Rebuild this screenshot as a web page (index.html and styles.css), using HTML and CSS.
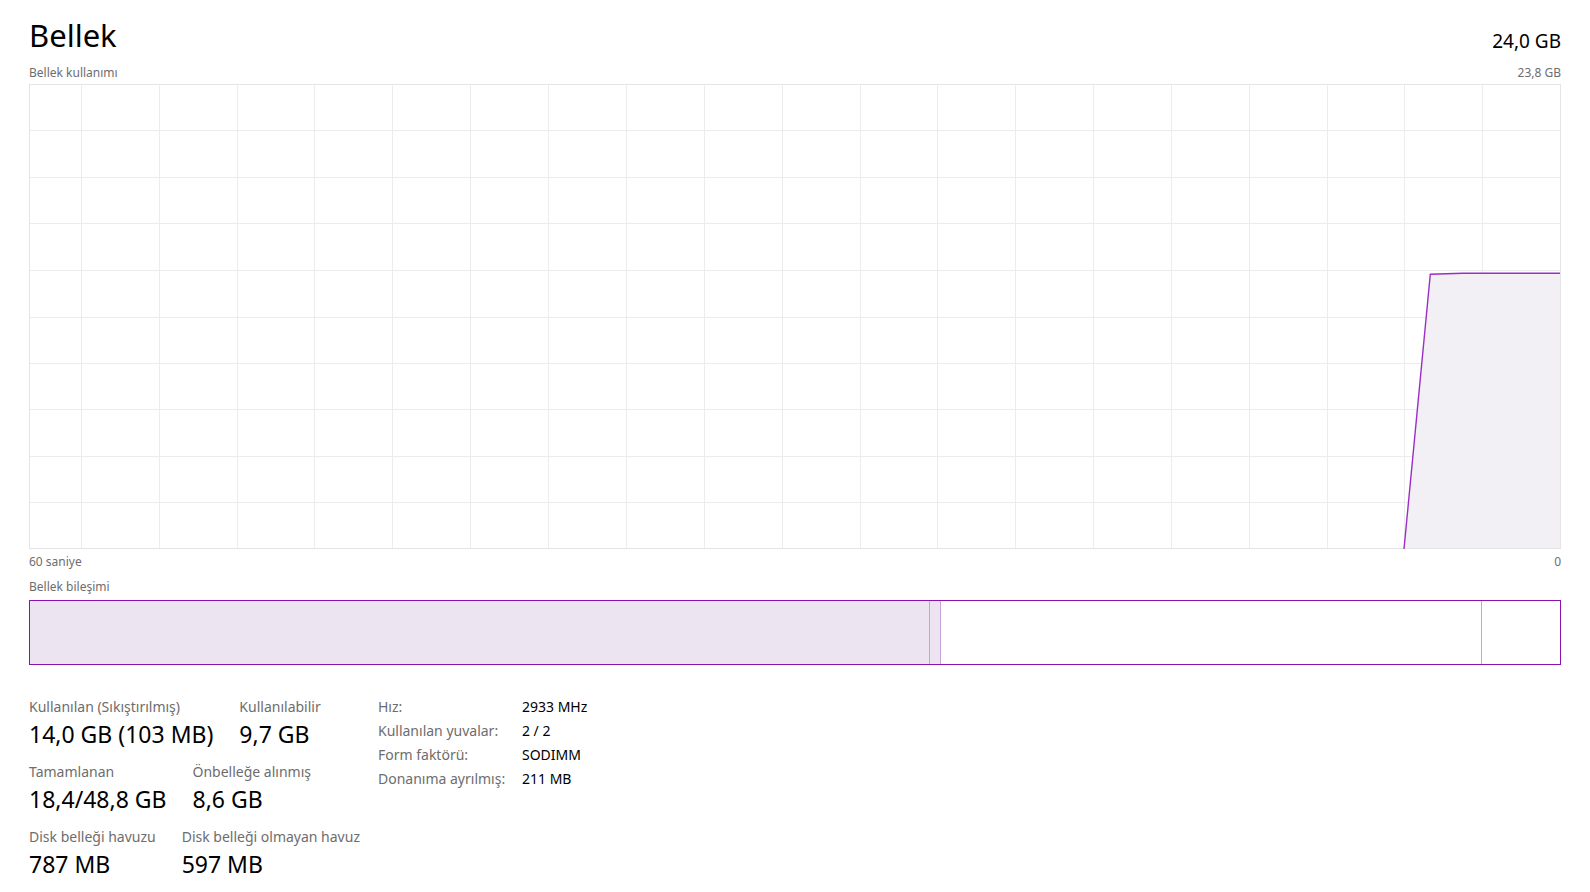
FILE: index.html
```html
<!DOCTYPE html>
<html lang="tr">

<head>
  <meta charset="UTF-8">
  <meta name="viewport" content="width=device-width, initial-scale=1.0">
  <title>Bellek</title>
  <link rel="stylesheet" href="styles.css">
</head>

<body>
  <div class="page">
    <header class="head">
      <h1>Bellek</h1>
      <span class="total">24,0 GB</span>
    </header>

    <div class="caption">
      <span>Bellek kullanımı</span>
      <span>23,8 GB</span>
    </div>

    <div class="chart">
      <svg width="1532" height="465" viewBox="0 0 1532 465">
        <g class="grid" shape-rendering="crispEdges">
          <path d="M52.5 0V465M130.5 0V465M208.5 0V465M285.5 0V465M363.5 0V465M441.5 0V465M519.5 0V465M597.5 0V465M675.5 0V465M753.5 0V465M831.5 0V465M908.5 0V465M986.5 0V465M1064.5 0V465M1142.5 0V465M1220.5 0V465M1298.5 0V465M1375.5 0V465M1453.5 0V465" />
          <path d="M0 46.5H1532M0 93.5H1532M0 139.5H1532M0 186.5H1532M0 233.5H1532M0 279.5H1532M0 325.5H1532M0 372.5H1532M0 418.5H1532" />
        </g>
        <polygon class="area" points="1375,465 1401.3,190.3 1434,189.3 1531,189.3 1531,465" />
        <rect class="frame" x="0.5" y="0.5" width="1531" height="464" shape-rendering="crispEdges" />
        <polyline class="line" points="1375,465 1401.3,190.3 1434,189.3 1531,189.3" />
      </svg>
    </div>

    <div class="caption axis">
      <span>60 saniye</span>
      <span>0</span>
    </div>

    <div class="caption comp-title">Bellek bileşimi</div>

    <div class="comp">
      <div class="seg used"></div>
      <div class="seg modified"></div>
      <div class="seg standby"></div>
      <div class="seg free"></div>
    </div>

    <section class="stats">
      <div class="stats-main">
        <div class="row">
          <div class="stat">
            <div class="lbl">Kullanılan (Sıkıştırılmış)</div>
            <div class="val">14,0 GB (103 MB)</div>
          </div>
          <div class="stat">
            <div class="lbl">Kullanılabilir</div>
            <div class="val">9,7 GB</div>
          </div>
        </div>
        <div class="row">
          <div class="stat">
            <div class="lbl">Tamamlanan</div>
            <div class="val">18,4/48,8 GB</div>
          </div>
          <div class="stat">
            <div class="lbl">Önbelleğe alınmış</div>
            <div class="val">8,6 GB</div>
          </div>
        </div>
        <div class="row">
          <div class="stat">
            <div class="lbl">Disk belleği havuzu</div>
            <div class="val">787 MB</div>
          </div>
          <div class="stat">
            <div class="lbl">Disk belleği olmayan havuz</div>
            <div class="val">597 MB</div>
          </div>
        </div>
      </div>

      <table class="specs">
        <tr>
          <td>Hız:</td>
          <td>2933 MHz</td>
        </tr>
        <tr>
          <td>Kullanılan yuvalar:</td>
          <td>2 / 2</td>
        </tr>
        <tr>
          <td>Form faktörü:</td>
          <td>SODIMM</td>
        </tr>
        <tr>
          <td>Donanıma ayrılmış:</td>
          <td>211 MB</td>
        </tr>
      </table>
    </section>
  </div>
</body>

</html>
```

FILE: styles.css
```css
* {
  margin: 0;
  box-sizing: border-box;
}

body {
  font-family: "Noto Sans", "Open Sans", sans-serif;
  background: white;
  color: black;
}

.page {
  padding: 0 29px;
}

.head {
  display: flex;
  justify-content: space-between;
  align-items: baseline;
  height: 63px;
  padding-top: 12px;
}

.head h1 {
  font-size: 31px;
  font-weight: normal;
  line-height: 46px;
}

.total {
  font-size: 19px;
  position: relative;
  top: 1px;
}

.caption {
  display: flex;
  justify-content: space-between;
  font-size: 12px;
  line-height: 20px;
  color: #6d6d6d;
  height: 21px;
}

.chart svg {
  display: block;
}

.grid path {
  stroke: #ececec;
  stroke-width: 1;
  fill: none;
}

.frame {
  fill: none;
  stroke: #e4e4e4;
}

.area {
  fill: #f2f0f4;
}

.line {
  fill: none;
  stroke: #9b2fc5;
  stroke-width: 1.4;
}

.axis {
  padding-top: 3px;
  height: 28px;
}

.comp-title {
  height: 23px;
}

.comp {
  display: flex;
  height: 65px;
  border: 1px solid #8b12ae;
}

.seg {
  border-right: 1px solid #c9a2db;
}

.used {
  width: 900px;
  background: #ede4f2;
}

.modified {
  width: 11px;
  background: #ede4f2;
}

.standby {
  width: 541px;
}

.free {
  flex: 1;
  border-right: none;
}

.stats {
  display: flex;
  align-items: flex-start;
  padding-top: 32px;
}

.row {
  display: flex;
  gap: 26px;
  height: 65px;
}

.lbl {
  font-size: 14px;
  line-height: 20px;
  color: #6d6d6d;
}

.val {
  font-size: 23px;
  line-height: 31px;
  padding-top: 2px;
}

.specs {
  margin-left: 18px;
  border-collapse: collapse;
  font-size: 14px;
}

.specs td {
  padding: 0;
  height: 24px;
  line-height: 20px;
  vertical-align: top;
}

.specs td:first-child {
  color: #6d6d6d;
  width: 144px;
}
```
